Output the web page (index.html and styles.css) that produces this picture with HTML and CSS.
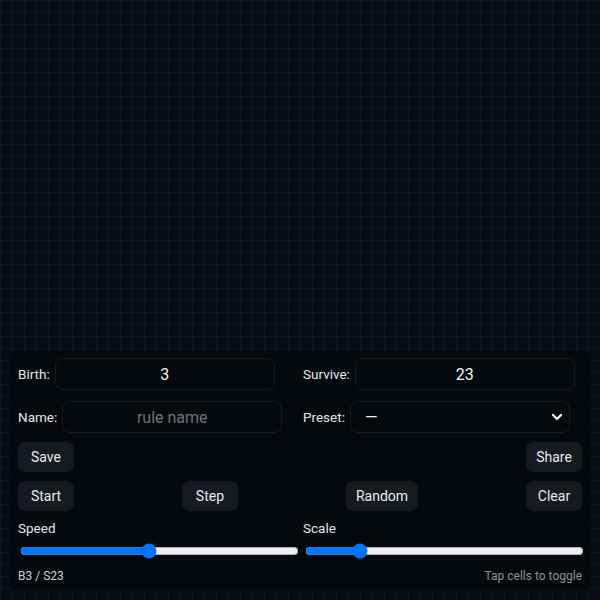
FILE: index.html
```html
<!DOCTYPE html>
<html lang="en">
<head>
    <meta charset="UTF-8">
    <meta name="viewport" content="width=device-width, initial-scale=1.0">
    <title>Life</title>
    <link rel="stylesheet" href="styles.css">
</head>
<body>
    <div class="board"></div>
    <div class="panel">
        <div class="row two">
            <label class="field"><span>Birth:</span><input class="box" type="text" value="3"></label>
            <label class="field"><span>Survive:</span><input class="box" type="text" value="23"></label>
        </div>
        <div class="row two second">
            <label class="field"><span>Name:</span><input class="box" type="text" placeholder="rule name"></label>
            <label class="field"><span>Preset:</span>
                <select class="box select">
                    <option>—</option>
                </select>
            </label>
        </div>
        <div class="row spread">
            <button>Save</button>
            <button>Share</button>
        </div>
        <div class="row spread">
            <button>Start</button>
            <button>Step</button>
            <button>Random</button>
            <button>Clear</button>
        </div>
        <div class="row two">
            <label class="slider"><span>Speed</span><input type="range" min="0" max="100" value="46"></label>
            <label class="slider"><span>Scale</span><input type="range" min="0" max="100" value="18"></label>
        </div>
        <div class="row spread status">
            <span class="rule">B3 / S23</span>
            <span class="hint">Tap cells to toggle</span>
        </div>
    </div>
</body>
</html>
```

FILE: styles.css
```css
html, body {
    margin: 0;
    height: 100%;
}
body {
    font-family: Roboto, "Noto Sans", sans-serif;
    background: #070c14;
    color: #e3e6ea;
    position: relative;
    overflow: hidden;
}
.board {
    height: 100%;
    background-image:
        linear-gradient(rgba(40, 62, 82, 0.18) 1px, transparent 1px),
        linear-gradient(90deg, rgba(40, 62, 82, 0.18) 1px, transparent 1px);
    background-size: 12px 12px;
}
.panel {
    position: absolute;
    left: 10px;
    right: 10px;
    bottom: 10px;
    background: #05090e;
    border-radius: 6px;
    padding: 8px 8px 7px;
    display: flex;
    flex-direction: column;
    gap: 9px;
}
.row {
    display: flex;
}
.second {
    margin-top: 2px;
}
.two {
    gap: 6px;
}
.two > * {
    flex: 1;
}
.spread {
    justify-content: space-between;
}
.field {
    display: flex;
    align-items: center;
    gap: 5px;
    font-size: 13.5px;
}
.box {
    width: 220px;
    height: 32px;
    box-sizing: border-box;
    background: #05080d;
    border: 1px solid #151a22;
    border-radius: 8px;
    color: #f2f4f6;
    font-family: inherit;
    font-size: 16px;
    text-align: center;
    outline: none;
}
.box::placeholder {
    color: #6c727b;
}
.select {
    appearance: none;
    text-align: left;
    padding: 0 14px;
    background-image: url("data:image/svg+xml,%3Csvg xmlns='http://www.w3.org/2000/svg' width='12' height='8' viewBox='0 0 12 8'%3E%3Cpath d='M2 2l4 4 4-4' fill='none' stroke='white' stroke-width='2.2' stroke-linecap='round' stroke-linejoin='round'/%3E%3C/svg%3E");
    background-repeat: no-repeat;
    background-position: right 6px center;
}
button {
    height: 30px;
    min-width: 56px;
    padding: 0 10px;
    background: #151a21;
    color: #e8eaed;
    border: none;
    border-radius: 7px;
    font-family: inherit;
    font-size: 14px;
}
.slider {
    display: flex;
    flex-direction: column;
    gap: 5px;
    font-size: 13.5px;
}
.slider input {
    width: 100%;
    margin: 2px 2px;
}
.status {
    font-size: 12px;
    margin-top: -1px;
}
.rule {
    color: #c9cdd3;
}
.hint {
    color: #8b9099;
}
```
